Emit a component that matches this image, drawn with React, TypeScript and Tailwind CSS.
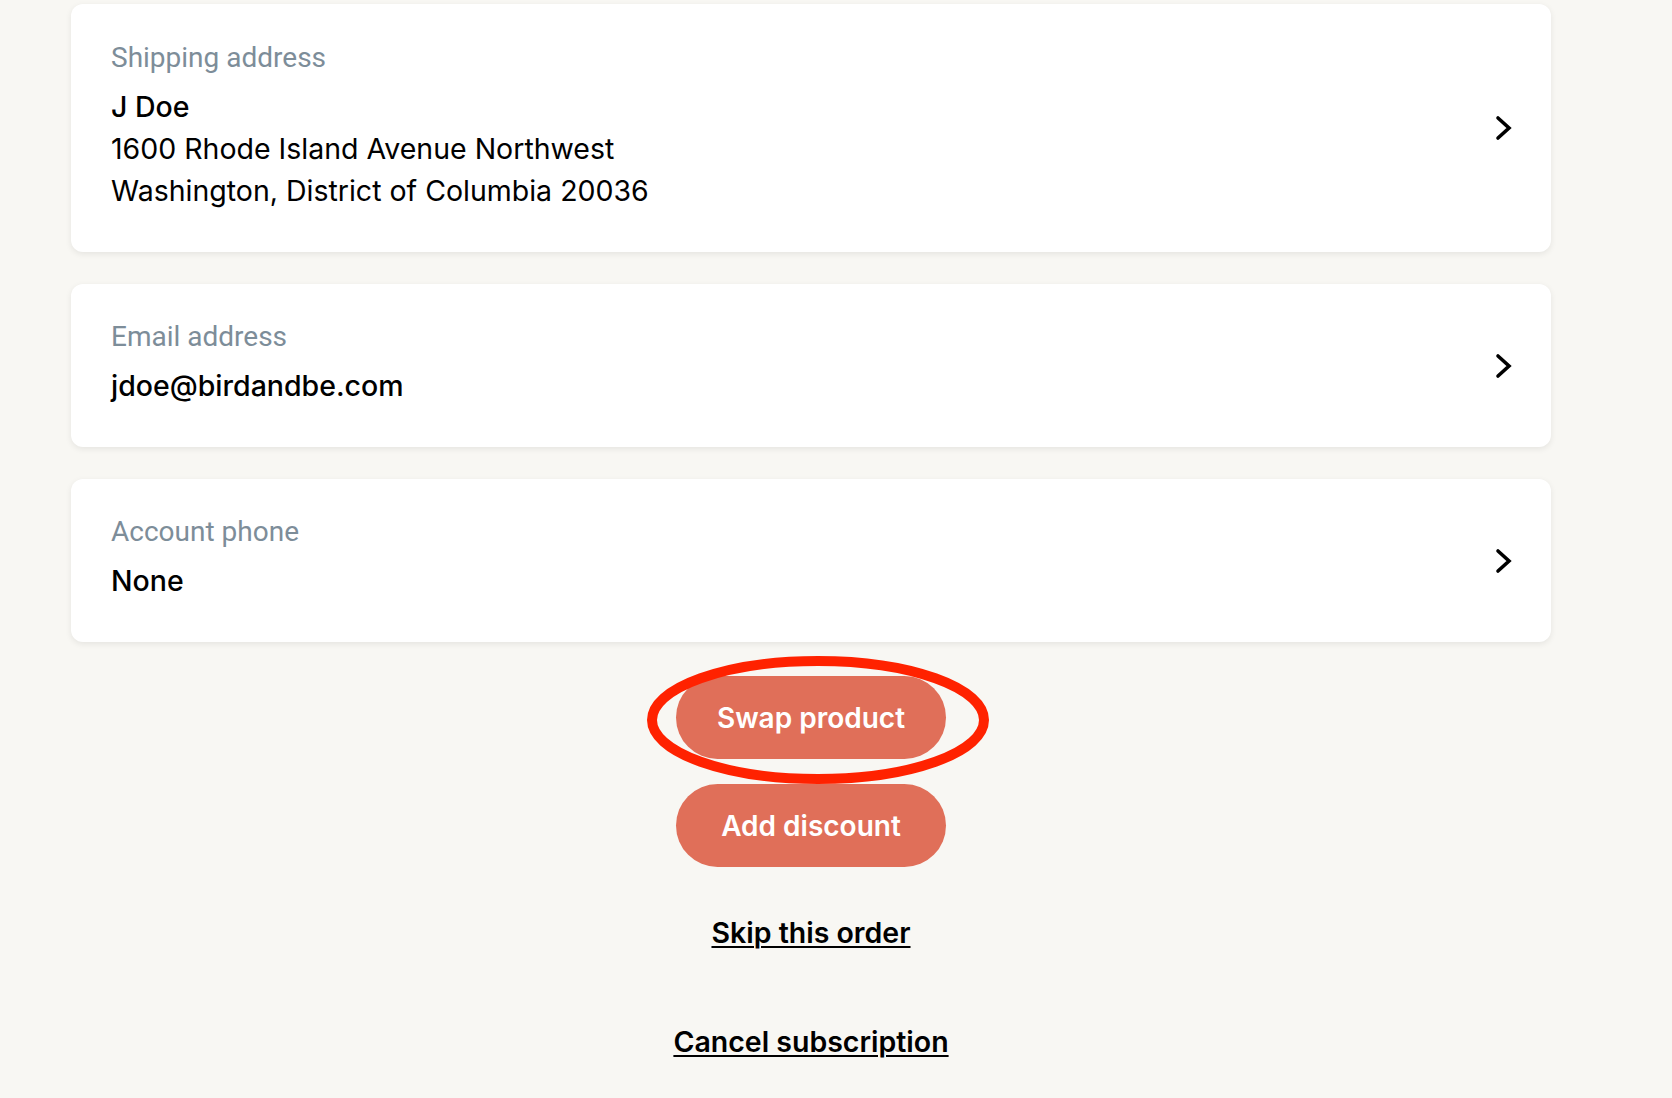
import React from "react";

function Chevron() {
  return (
    <svg width="18" height="28" viewBox="0 0 18 28" fill="none" className="shrink-0">
      <polyline points="3,4 14,14 3,24" stroke="#000" strokeWidth="3.6" strokeLinecap="round" strokeLinejoin="miter" />
    </svg>
  );
}

function Card({ label, children, h }: { label: string; children: React.ReactNode; h: string }) {
  return (
    <div className={`bg-white rounded-[12px] shadow-[0_2px_6px_rgba(0,0,0,0.08)] flex items-center justify-between pl-[40px] pr-[38px] ${h}`}>
      <div className="flex flex-col">
        <div className="font-['Roboto',sans-serif] text-[28px] leading-[26px] text-[#7d8d99]">{label}</div>
        <div className="mt-[15px] font-['Inter',sans-serif] text-[28.5px] leading-[42px] text-black">{children}</div>
      </div>
      <Chevron />
    </div>
  );
}

export default function App() {
  return (
    <div className="min-h-screen w-full bg-[#f8f7f3]">
      <div className="ml-[71px] w-[1480px] pt-[4px] flex flex-col">
        <div className="flex flex-col gap-[32px]">
          <Card label="Shipping address" h="h-[248px]">
            <div className="font-medium">J Doe</div>
            <div>1600 Rhode Island Avenue Northwest</div>
            <div>Washington, District of Columbia 20036</div>
          </Card>
          <Card label="Email address" h="h-[163px]">
            <div className="font-medium">jdoe@birdandbe.com</div>
          </Card>
          <Card label="Account phone" h="h-[163px]">
            <div className="font-medium">None</div>
          </Card>
        </div>
        <div className="flex flex-col items-center">
          <div className="relative mt-[34px]">
            <button className="w-[270px] h-[83px] rounded-full bg-[#e06f59] text-white font-['Inter',sans-serif] font-semibold text-[28px]">
              Swap product
            </button>
            <svg className="absolute left-[-30px] top-[-21px] pointer-events-none" width="344" height="130" viewBox="0 0 344 130" fill="none">
              <ellipse cx="172" cy="65" rx="166" ry="59" stroke="#ff2200" strokeWidth="10" />
            </svg>
          </div>
          <button className="mt-[25px] w-[270px] h-[83px] rounded-full bg-[#e06f59] text-white font-['Inter',sans-serif] font-semibold text-[28px]">
            Add discount
          </button>
          <a href="#" className="mt-[46px] font-['Inter',sans-serif] font-semibold text-[28.5px] leading-[40px] text-black underline underline-offset-[3px] decoration-2">
            Skip this order
          </a>
          <a href="#" className="mt-[69px] font-['Inter',sans-serif] font-semibold text-[28.5px] leading-[40px] text-black underline underline-offset-[3px] decoration-2">
            Cancel subscription
          </a>
        </div>
      </div>
    </div>
  );
}
